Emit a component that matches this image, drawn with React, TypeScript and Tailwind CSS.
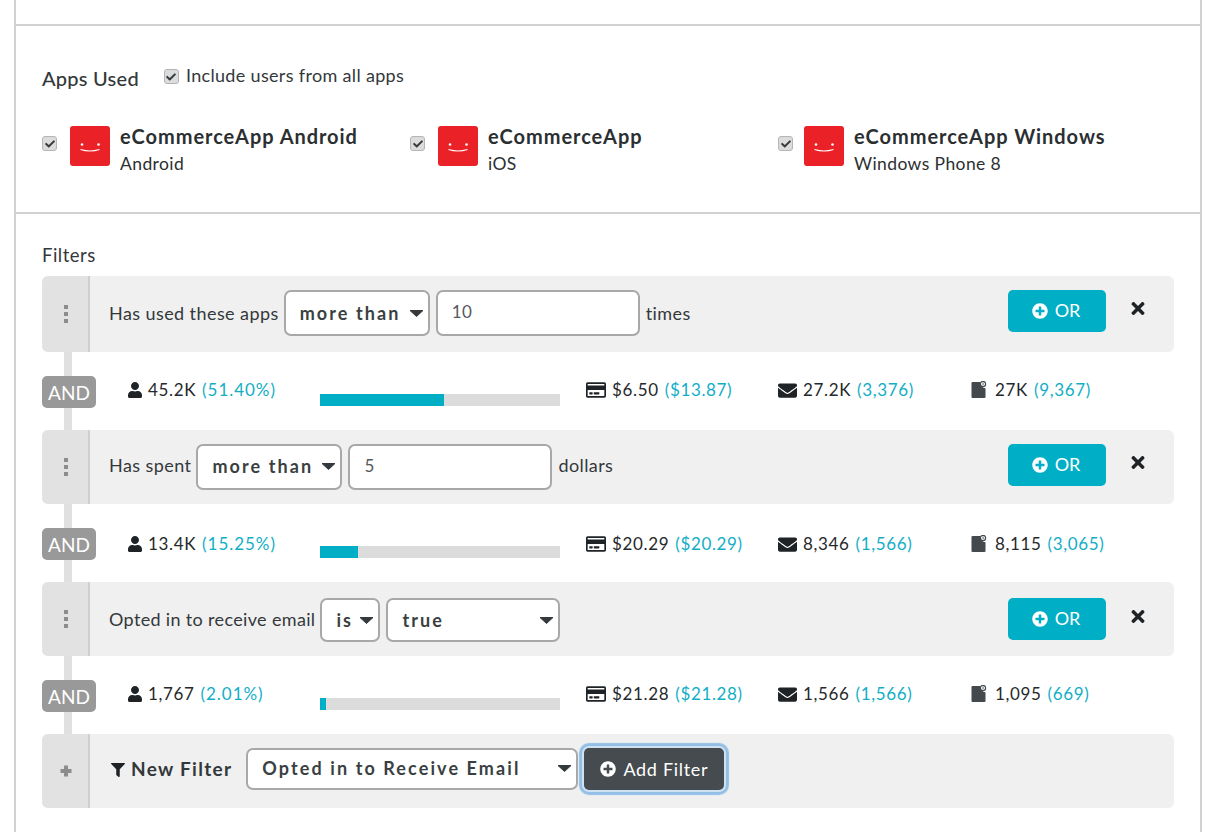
import React from "react";
import { FaCheck, FaUser, FaRegCreditCard, FaEnvelope, FaTimes, FaFilter, FaPlusCircle } from "react-icons/fa";

function Check({ className = "" }: { className?: string }) {
  return (
    <span className={"flex h-[15px] w-[15px] shrink-0 items-center justify-center rounded-[3px] border border-[#b5b5b5] bg-[#dcdcdc] " + className}>
      <FaCheck className="h-[10px] w-[10px] text-[#333b3f]" />
    </span>
  );
}

function AppIcon() {
  return (
    <svg width="40" height="40" viewBox="0 0 40 40" className="shrink-0">
      <rect width="40" height="40" rx="3" fill="#ea2227" />
      <circle cx="12" cy="18.5" r="1.3" fill="#fff" />
      <circle cx="28.5" cy="18.5" r="1.3" fill="#fff" />
      <path d="M10.5 23.5 Q20 26.5 29.5 23.5" stroke="#fff" strokeWidth="1.1" fill="none" />
    </svg>
  );
}

function AppItem({ name, sub, w, gap = "mr-[13px]" }: { name: string; sub: string; w: string; gap?: string }) {
  return (
    <div className={"flex items-start " + w}>
      <Check className={"mt-[10px] " + gap} />
      <AppIcon />
      <div className="ml-[10px] -mt-[4px]">
        <div className="text-[20px] font-bold leading-[28px] tracking-[0.95px] text-[#2b2f31]">{name}</div>
        <div className="text-[17.5px] leading-[28px] tracking-[0.4px] text-[#2b2f31]">{sub}</div>
      </div>
    </div>
  );
}

function Caret() {
  return (
    <svg width="15" height="7" viewBox="0 0 15 7" className="shrink-0">
      <path d="M1 0.5h13L7.5 6.5z" fill="#33393c" stroke="#33393c" strokeWidth="1" strokeLinejoin="round" />
    </svg>
  );
}

function Sel({ label, w, h = "h-[46px]", pb = "pb-0" }: { label: string; w: string; h?: string; pb?: string }) {
  return (
    <div className={"flex items-center justify-between rounded-[7px] border-2 border-[#a8a8a8] bg-white pl-[14px] pr-[4px] text-[18px] font-bold tracking-[2.1px] text-[#3a3f42] " + w + " " + h + " " + pb}>
      <span>{label}</span>
      <Caret />
    </div>
  );
}

function Input({ value }: { value: string }) {
  return (
    <div className="flex h-[46px] w-[204px] items-center rounded-[7px] border-2 border-[#a8a8a8] bg-white pb-[3px] pl-[14px] text-[17px] tracking-[0.4px] text-[#55595c]">
      {value}
    </div>
  );
}

function Handle({ children }: { children: React.ReactNode }) {
  return (
    <div className="flex w-[48px] shrink-0 items-center justify-center self-stretch rounded-l-[6px] border-r-2 border-[#cfcfcf] bg-[#e2e2e2] pl-[2px]">
      {children}
    </div>
  );
}

function Dots() {
  return (
    <div className="flex flex-col gap-[3px]">
      <span className="h-[4px] w-[4px] bg-[#8c8c8c]" />
      <span className="h-[4px] w-[4px] bg-[#8c8c8c]" />
      <span className="h-[4px] w-[4px] bg-[#8c8c8c]" />
    </div>
  );
}

function ThickPlus() {
  return (
    <svg width="12" height="12" viewBox="0 0 12 12">
      <path d="M4 0.5h4V4h3.5v4H8v3.5H4V8H0.5V4H4z" fill="#8c8c8c" />
    </svg>
  );
}

function OrActions() {
  return (
    <div className="ml-auto flex items-start self-start">
      <div className="flex h-[42px] w-[98px] items-center justify-center gap-[7px] rounded-[5px] bg-[#00aec5] pb-[1px] pr-[2px] text-[18px] text-white">
        <FaPlusCircle className="h-[16px] w-[16px]" />
        <span>OR</span>
      </div>
      <div className="ml-[25px] mr-[29px] mt-[10px] flex h-[16px] w-[14px] items-center justify-center text-[#1f2326]">
        <FaTimes className="h-[19px] w-[15px]" />
      </div>
    </div>
  );
}

function Row({ h, children }: { h: string; children: React.ReactNode }) {
  return <div className={"flex rounded-[6px] bg-[#f0f0f0] " + h}>{children}</div>;
}

function FileIcon() {
  return (
    <svg width="16" height="18" viewBox="0 0 16 18" className="shrink-0">
      <path d="M1.5 1h8.2a5 5 0 0 0 4.8 6.2V16a1 1 0 0 1-1 1h-12a1 1 0 0 1-1-1V2a1 1 0 0 1 1-1z" fill="#43494c" />
      <circle cx="12" cy="3" r="2.6" fill="none" stroke="#43494c" strokeWidth="1.2" />
      <rect x="11.6" y="1.6" width="0.9" height="2.6" fill="#43494c" />
    </svg>
  );
}

function Stats({ u, up, bar, c, cp, e, ep, f, fp, top = "mt-[25px]" }: { u: string; up: string; bar: number; c: string; cp: string; e: string; ep: string; f: string; fp: string; top?: string }) {
  return (
    <div className="relative flex h-[78px] text-[17px] tracking-[0.65px] text-[#26292b]">
      <div className="absolute bottom-0 left-[22px] top-0 w-[8px] bg-[#e0e0e0]" />
      <div className="relative mt-[24px] flex h-[32px] w-[54px] shrink-0 items-center justify-center rounded-[5px] bg-[#999999] pt-[3px] text-[19px] tracking-normal text-white">
        AND
      </div>
      <div className={"ml-[32px] flex h-[26px] w-[192px] shrink-0 items-center " + top}>
        <FaUser className="mr-[6px] h-[16px] w-[14px] text-[#1f2326]" />
        <span>{u}</span>
        <span className="ml-[6px] tracking-[0.95px] text-[#12aec6]">{up}</span>
      </div>
      <div className="mt-[42px] h-[12px] w-[240px] shrink-0 bg-[#dcdcdc]">
        <div className="h-full bg-[#00aec5]" style={{ width: `${bar}%` }} />
      </div>
      <div className={"ml-[26px] flex h-[26px] w-[192px] shrink-0 items-center " + top}>
        <FaRegCreditCard className="mr-[6px] h-[20px] w-[20px] text-[#1f2326]" />
        <span>{c}</span>
        <span className="ml-[6px] text-[#12aec6]">{cp}</span>
      </div>
      <div className={"flex h-[26px] w-[193px] shrink-0 items-center " + top}>
        <FaEnvelope className="mr-[6px] h-[19px] w-[19px] text-[#1f2326]" />
        <span>{e}</span>
        <span className="ml-[6px] text-[#12aec6]">{ep}</span>
      </div>
      <div className={"flex h-[26px] items-center " + top}>
        <FileIcon />
        <span className="ml-[8px]">{f}</span>
        <span className="ml-[6px] text-[#12aec6]">{fp}</span>
      </div>
    </div>
  );
}

const label = "text-[18px] tracking-[0.42px] text-[#33383b]";

export default function App() {
  return (
    <div className="h-[832px] w-[1220px] overflow-hidden bg-white font-['Lato',sans-serif]">
      <div className="ml-[14px] h-full w-[1188px] border-x-2 border-[#d2d2d2]">
        <div className="h-[26px] border-b-2 border-[#d2d2d2]" />
        <div className="h-[188px] border-b-2 border-[#d2d2d2] px-[26px] pt-[37px]">
          <div className="flex items-start">
            <span className="mt-[2px] text-[20px] font-medium leading-[26px] tracking-[0.25px] text-[#33383b]">Apps Used</span>
            <Check className="ml-[25px] mt-[6px]" />
            <span className="ml-[7px] -mt-[1px] text-[18px] leading-[26px] tracking-[0.33px] text-[#33383b]">Include users from all apps</span>
          </div>
          <div className="mt-[35px] flex">
            <AppItem name="eCommerceApp Android" sub="Android" w="w-[368px]" />
            <AppItem name="eCommerceApp" sub="iOS" w="w-[368px]" />
            <AppItem name="eCommerceApp Windows" sub="Windows Phone 8" w="w-[360px]" gap="mr-[11px]" />
          </div>
        </div>
        <div className="px-[26px] pt-[29px]">
          <div className="mb-[9px] h-[24px] text-[18.5px] leading-[24px] tracking-[0.5px] text-[#33383b]">Filters</div>
          <Row h="h-[76px]">
            <Handle><Dots /></Handle>
            <div className="flex flex-1 items-start pt-[14px]">
              <span className={"ml-[19px] mt-[10px] mr-[5px] " + label}>Has used these apps</span>
              <Sel label="more than" w="w-[146px]" />
              <div className="ml-[6px]"><Input value="10" /></div>
              <span className={"ml-[6px] mt-[10px] " + label}>times</span>
              <OrActions />
            </div>
          </Row>
          <Stats u="45.2K" up="(51.40%)" bar={51.6} c="$6.50" cp="($13.87)" e="27.2K" ep="(3,376)" f="27K" fp="(9,367)" />
          <Row h="h-[74px]">
            <Handle><Dots /></Handle>
            <div className="flex flex-1 items-start pt-[14px]">
              <span className={"ml-[19px] mt-[8px] mr-[5px] " + label}>Has spent</span>
              <Sel label="more than" w="w-[146px]" pb="pb-[1px]" />
              <div className="ml-[6px]"><Input value="5" /></div>
              <span className={"ml-[6px] mt-[8px] " + label}>dollars</span>
              <OrActions />
            </div>
          </Row>
          <Stats u="13.4K" up="(15.25%)" bar={16} c="$20.29" cp="($20.29)" e="8,346" ep="(1,566)" f="8,115" fp="(3,065)" top="mt-[27px]" />
          <Row h="h-[74px]">
            <Handle><Dots /></Handle>
            <div className="flex flex-1 items-start pt-[16px]">
              <span className="ml-[19px] mt-[8px] mr-[5px] text-[18px] tracking-[0.34px] text-[#33383b]">Opted in to receive email</span>
              <Sel label="is" w="w-[60px]" h="h-[44px]" />
              <div className="ml-[6px]"><Sel label="true" w="w-[174px]" h="h-[44px]" /></div>
              <OrActions />
            </div>
          </Row>
          <Stats u="1,767" up="(2.01%)" bar={2.5} c="$21.28" cp="($21.28)" e="1,566" ep="(1,566)" f="1,095" fp="(669)" />
          <Row h="h-[74px]">
            <Handle><ThickPlus /></Handle>
            <div className="flex flex-1 items-start pt-[14px]">
              <FaFilter className="ml-[21px] mt-[15px] h-[14px] w-[14px] text-[#1f2326]" />
              <span className="ml-[6px] mt-[7px] text-[19px] font-bold tracking-[1.3px] text-[#33383b]">New Filter</span>
              <div className="ml-[14px]">
                <Sel label="Opted in to Receive Email" w="w-[332px]" h="h-[42px]" pb="pb-[2px]" />
              </div>
              <div className="ml-[6px] flex h-[42px] w-[140px] items-center justify-center gap-[7px] rounded-[5px] bg-[#454b4e] text-[18px] tracking-[0.7px] text-white shadow-[0_0_0_2px_#cfe2f2,0_0_1px_5px_#93bfe6]">
                <FaPlusCircle className="h-[16px] w-[16px]" />
                <span>Add Filter</span>
              </div>
            </div>
          </Row>
        </div>
      </div>
    </div>
  );
}
